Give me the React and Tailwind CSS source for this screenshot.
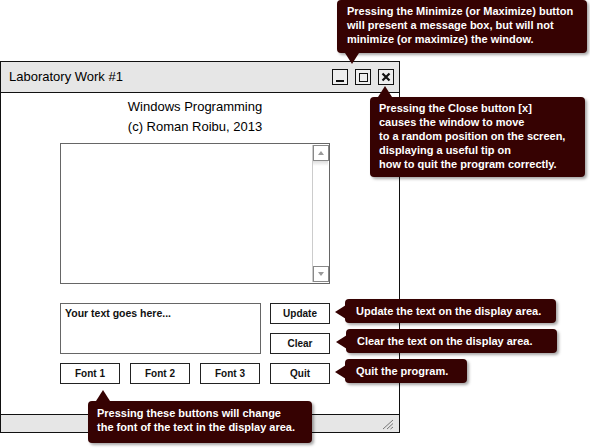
import React from "react";

const font = { fontFamily: '"Liberation Sans", Arial, sans-serif' };

function Tip({ className, children, pointer }) {
  return (
    <div
      className={`absolute rounded-[4px] bg-[#360202] text-white font-bold text-[11px] leading-[14px] shadow-[2px_2px_3px_rgba(0,0,0,0.35)] ${className}`}
    >
      {pointer}
      {children}
    </div>
  );
}

function Down({ className }) {
  return (
    <svg className={`absolute ${className}`} width="14" height="11" viewBox="0 0 14 11">
      <polygon points="0,0 14,0 7,11" fill="#360202" />
    </svg>
  );
}
function Up({ className }) {
  return (
    <svg className={`absolute ${className}`} width="14" height="11" viewBox="0 0 14 11">
      <polygon points="0,11 14,11 7,0" fill="#360202" />
    </svg>
  );
}
function Left({ className }) {
  return (
    <svg className={`absolute ${className}`} width="11" height="14" viewBox="0 0 11 14">
      <polygon points="11,0 11,14 0,7" fill="#360202" />
    </svg>
  );
}

function Btn({ children }) {
  return (
    <div className="w-[60px] h-[21px] border border-[#222] bg-white flex items-center justify-center text-[10px] font-bold text-[#111]">
      {children}
    </div>
  );
}

export default function App() {
  return (
    <div className="relative w-[590px] h-[448px] bg-white overflow-hidden" style={font}>
      <div className="pt-[61px]">
        <div className="w-[400px] h-[372px] border border-[#111] flex flex-col">
          {/* title bar */}
          <div className="h-[31px] bg-[#e6e6e6] border-b border-[#111] flex items-center justify-between pl-[8px] pr-[5px]">
            <span className="text-[13px] text-black">Laboratory Work #1</span>
            <div className="flex gap-[7px] items-center">
              <div className="w-[16px] h-[16px] border-[1.5px] border-[#111] bg-[#eee] flex items-end justify-center pb-[2px]">
                <div className="w-[8px] h-[2px] bg-[#111]" />
              </div>
              <div className="w-[16px] h-[16px] border-[1.5px] border-[#111] bg-[#eee] flex items-center justify-center">
                <div className="w-[9px] h-[9px] border-[1.5px] border-[#111]" />
              </div>
              <div className="w-[16px] h-[16px] border-[1.5px] border-[#111] bg-[#eee] flex items-center justify-center">
                <svg width="10" height="10" viewBox="0 0 10 10">
                  <path d="M1.5 1.5 L8.5 8.5 M8.5 1.5 L1.5 8.5" stroke="#111" strokeWidth="2.2" />
                </svg>
              </div>
            </div>
          </div>
          {/* body */}
          <div className="flex-1 pl-[59px] pt-[4px]">
            <div className="w-[270px] text-center text-[13px] leading-[20px] text-black">
              <div>Windows Programming</div>
              <div>(c) Roman Roibu, 2013</div>
            </div>
            <div className="mt-[6px] w-[270px] h-[141px] border border-[#666] bg-white flex justify-end pr-[1px] py-[1px]">
              <div className="w-[16px] h-full border-l border-[#ccc] flex flex-col justify-between">
                <div>
                  <div className="w-[16px] h-[16px] border border-[#888] bg-white flex items-center justify-center">
                    <svg width="6" height="4" viewBox="0 0 6 4"><polygon points="0,4 6,4 3,0" fill="#999" /></svg>
                  </div>
                  <div className="h-[5px] bg-gradient-to-b from-[#ddd] to-white" />
                </div>
                <div className="w-[16px] h-[16px] border border-[#888] bg-white flex items-center justify-center">
                  <svg width="6" height="4" viewBox="0 0 6 4"><polygon points="0,0 6,0 3,4" fill="#999" /></svg>
                </div>
              </div>
            </div>
            <div className="mt-[19px] flex gap-[9px]">
              <div className="w-[201px] h-[51px] border border-[#666] px-[4px] pt-[3px] text-[10.5px] font-bold text-[#111] leading-[13px]">
                Your text goes here...
              </div>
              <div className="flex flex-col gap-[9px]">
                <Btn>Update</Btn>
                <Btn>Clear</Btn>
              </div>
            </div>
            <div className="mt-[9px] flex gap-[10px]">
              <Btn>Font 1</Btn>
              <Btn>Font 2</Btn>
              <Btn>Font 3</Btn>
              <Btn>Quit</Btn>
            </div>
          </div>
          {/* status bar */}
          <div className="h-[18px] border-t border-[#111] bg-[#e6e6e6] flex justify-end items-end pr-[5px] pb-[2px]">
            <svg width="14" height="12" viewBox="0 0 14 12">
              <path d="M3 11 L13 2 M7 11 L13 5.5 M10.5 11 L13 9" stroke="#777" strokeWidth="1" />
            </svg>
          </div>
        </div>
      </div>

      {/* tooltips */}
      <Tip className="left-[337px] top-0 w-[250px] h-[53px] pl-[10px] pt-[4px]" pointer={<Down className="left-[8px] top-[53px]" />}>
        <div>Pressing the Minimize (or Maximize) button</div>
        <div>will present a message box, but will not</div>
        <div>minimize (or maximize) the window.</div>
      </Tip>
      <Tip className="left-[370px] top-[97px] w-[215px] h-[80px] pl-[9px] pt-[4px]" pointer={<Up className="left-[8px] top-[-11px]" />}>
        <div>Pressing the Close button [x]</div>
        <div>causes the window to move</div>
        <div>to a random position on the screen,</div>
        <div>displaying a useful tip on</div>
        <div>how to quit the program correctly.</div>
      </Tip>
      <Tip className="left-[345px] top-[299px] w-[211px] h-[24px] pl-[11px] pt-[5px]" pointer={<Left className="left-[-10px] top-[6px]" />}>
        Update the text on the display area.
      </Tip>
      <Tip className="left-[346px] top-[329px] w-[211px] h-[24px] pl-[11px] pt-[5px]" pointer={<Left className="left-[-10px] top-[6px]" />}>
        Clear the text on the display area.
      </Tip>
      <Tip className="left-[345px] top-[359px] w-[122px] h-[24px] pl-[11px] pt-[5px]" pointer={<Left className="left-[-10px] top-[6px]" />}>
        Quit the program.
      </Tip>
      <Tip className="left-[88px] top-[401px] w-[224px] h-[42px] pl-[9px] pt-[5px]" pointer={<Up className="left-[8px] top-[-11px]" />}>
        <div>Pressing these buttons will change</div>
        <div>the font of the text in the display area.</div>
      </Tip>
    </div>
  );
}
